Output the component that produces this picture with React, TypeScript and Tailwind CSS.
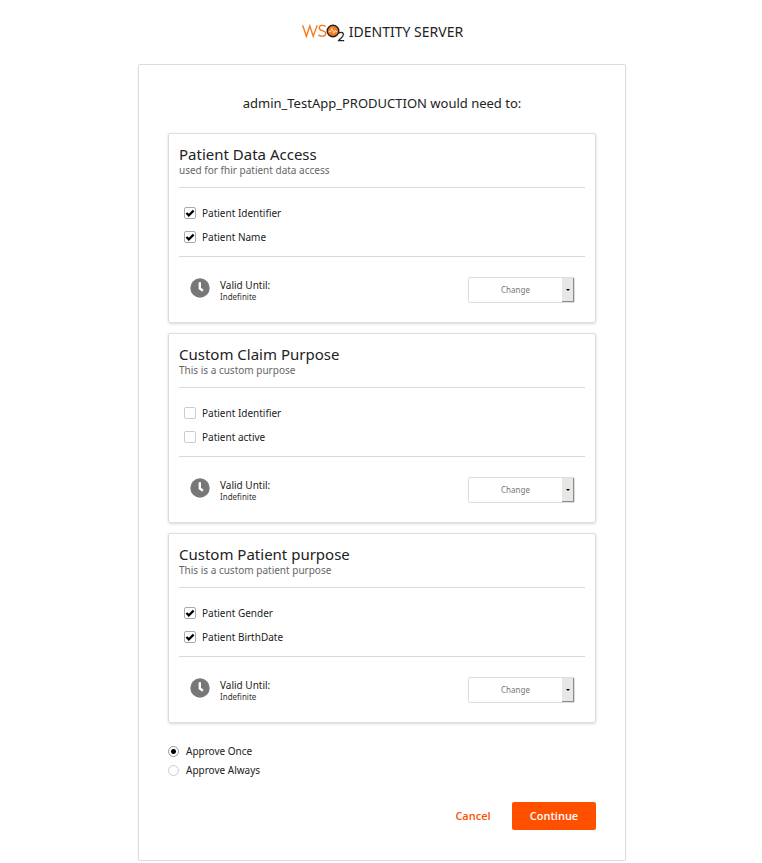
import { useState } from "react";

type Claim = { id: string; label: string; checked: boolean };
type Purpose = { id: string; title: string; description: string; claims: Claim[] };

const purposes: Purpose[] = [
  {
    id: "data-access",
    title: "Patient Data Access",
    description: "used for fhir patient data access",
    claims: [
      { id: "identifier", label: "Patient Identifier", checked: true },
      { id: "name", label: "Patient Name", checked: true },
    ],
  },
  {
    id: "custom-claim",
    title: "Custom Claim Purpose",
    description: "This is a custom purpose",
    claims: [
      { id: "identifier", label: "Patient Identifier", checked: false },
      { id: "active", label: "Patient active", checked: false },
    ],
  },
  {
    id: "custom-patient",
    title: "Custom Patient purpose",
    description: "This is a custom patient purpose",
    claims: [
      { id: "gender", label: "Patient Gender", checked: true },
      { id: "birthdate", label: "Patient BirthDate", checked: true },
    ],
  },
];

function Logo() {
  return (
    <svg role="img" aria-label="WSO2" viewBox="0 0 44 20" className="h-5 w-11" fill="none">
      <path d="M1.6 3.2 L5.4 14.2 L8.8 4 L12.2 14.2 L16.2 3.2" stroke="#f47b20" strokeWidth="1.4" />
      <path
        d="M24.6 4.4 C22.6 2.8 18.2 2.8 18.2 5.9 C18.2 9 24.8 8.4 24.8 11.4 C24.8 14.6 19.6 14.9 17.4 13"
        stroke="#f47b20"
        strokeWidth="1.4"
      />
      <circle cx="32" cy="9" r="5.8" fill="#f47b20" stroke="#231f20" strokeWidth="1.4" />
      <path d="M28 9.6 H29.4 L31 6.4 L32.8 11.2 L34.2 8.4 L35 9.6 H36" stroke="#fff" strokeWidth="0.7" />
      <path
        d="M37.6 11.8 C38.4 9.8 42.4 9.8 42.4 12.6 C42.4 14.8 39 16.6 37.6 18.6 H43.2"
        stroke="#231f20"
        strokeWidth="1.2"
      />
    </svg>
  );
}

function ClockIcon() {
  return (
    <svg aria-hidden="true" viewBox="0 0 20 20" className="size-5 shrink-0">
      <circle cx="10" cy="10" r="9.7" fill="#777" />
      <path d="M9.8 4.2 V10.4 L12.9 12.8" fill="none" stroke="#fff" strokeWidth="2.4" />
    </svg>
  );
}

function ClaimCheckbox({ id, claim }: { id: string; claim: Claim }) {
  const [checked, setChecked] = useState(claim.checked);
  return (
    <li className="flex h-6 items-center gap-1.5">
      <span className="grid size-3 place-items-center">
        <input
          id={id}
          type="checkbox"
          checked={checked}
          onChange={(e) => setChecked(e.target.checked)}
          className="peer col-start-1 row-start-1 size-3 appearance-none rounded-xs border border-[#ccc] bg-white checked:border-[#aaa]"
        />
        <svg
          aria-hidden="true"
          viewBox="0 0 12 12"
          className="pointer-events-none invisible col-start-1 row-start-1 size-3 peer-checked:visible"
        >
          <path d="M2.4 6 L4.8 8.4 L9.6 3.6" fill="none" stroke="#000" strokeWidth="2.2" />
        </svg>
      </span>
      <label htmlFor={id} className="text-[10px]">
        {claim.label}
      </label>
    </li>
  );
}

function PurposeCard({ purpose }: { purpose: Purpose }) {
  return (
    <section className="rounded-xs border border-[#dcdcdc] px-2.5 shadow-[0_1px_3px_rgba(0,0,0,0.15)]">
      <header className="border-b border-[#d9d9d9] pt-2.5 pb-[11px]">
        <h3 className="text-[15px] leading-5">{purpose.title}</h3>
        <p className="text-[10px] leading-3 text-[#666]">{purpose.description}</p>
      </header>
      <ul className="border-b border-[#d9d9d9] px-[5px] pt-[13px] pb-[7px]">
        {purpose.claims.map((claim) => (
          <ClaimCheckbox key={claim.id} id={`${purpose.id}-${claim.id}`} claim={claim} />
        ))}
      </ul>
      <div className="flex items-center justify-between pt-5 pr-2.5 pb-[19px] pl-[11px]">
        <div className="flex items-start gap-2.5">
          <ClockIcon />
          <div>
            <p className="text-[10px] leading-[14px]">Valid Until:</p>
            <p className="text-[8px] leading-[10px] text-[#333]">Indefinite</p>
          </div>
        </div>
        <div className="relative">
          <select
            aria-label={`Change validity of ${purpose.title}`}
            className="block h-[26px] w-[107px] appearance-none rounded-xs border border-[#dcdcdc] bg-white pr-3 text-center text-[8px] text-[#777]"
          >
            <option>Change</option>
          </select>
          <span className="pointer-events-none absolute inset-y-px right-px flex w-3 items-center justify-center border-r border-b border-[#8c8c8c] bg-[#e7e7e6]">
            <span className="border-x-2 border-t-2 border-x-transparent border-t-black" />
          </span>
        </div>
      </div>
    </section>
  );
}

function ApprovalRadio({ value, label, defaultChecked }: { value: string; label: string; defaultChecked?: boolean }) {
  return (
    <label className="flex h-[19px] items-center gap-[7px] text-[10px]">
      <input
        type="radio"
        name="approval"
        value={value}
        defaultChecked={defaultChecked}
        className="size-[11px] appearance-none rounded-full border border-[#ccc] bg-white checked:border-[#999] checked:bg-[radial-gradient(circle,#000_2px,#fff_3px)]"
      />
      {label}
    </label>
  );
}

export default function App() {
  return (
    <div className="pl-0.5 font-['Noto_Sans',sans-serif] text-[#222]">
      <header className="flex h-16 items-center justify-center gap-1">
        <Logo />
        <h1 className="text-[14px] leading-5">IDENTITY SERVER</h1>
      </header>
      <main className="mx-auto max-w-[488px] rounded-xs border border-[#dcdcdc] px-[29px] pb-[30px] shadow-[0_1px_2px_rgba(0,0,0,0.08)]">
        <form onSubmit={(e) => e.preventDefault()}>
          <h2 className="pt-7 pb-5 text-center text-[13px] leading-5">admin_TestApp_PRODUCTION would need to:</h2>
          <div className="flex flex-col gap-2.5">
            {purposes.map((purpose) => (
              <PurposeCard key={purpose.id} purpose={purpose} />
            ))}
          </div>
          <div className="pt-[19px] pb-[22px]">
            <ApprovalRadio value="once" label="Approve Once" defaultChecked />
            <ApprovalRadio value="always" label="Approve Always" />
          </div>
          <div className="flex justify-end gap-[5px] font-['Open_Sans',sans-serif] text-[11px] font-semibold">
            <button type="button" className="h-7 w-[68px] rounded-xs text-[#ff5000]">
              Cancel
            </button>
            <button type="submit" className="h-7 w-[84px] rounded-xs bg-[#ff5000] text-white">
              Continue
            </button>
          </div>
        </form>
      </main>
    </div>
  );
}
